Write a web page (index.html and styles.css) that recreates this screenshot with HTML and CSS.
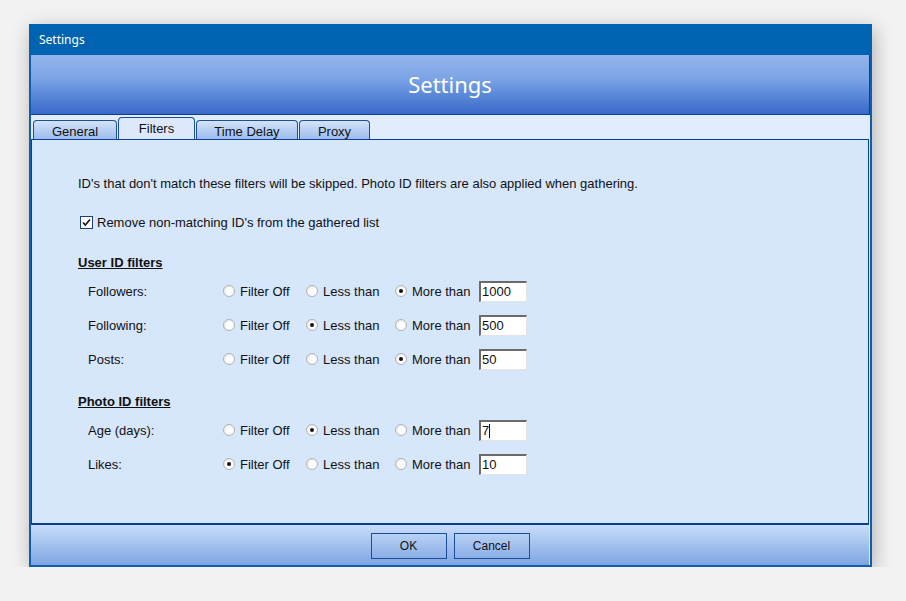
FILE: index.html
```html
<!DOCTYPE html>
<html>
  <head>
    <meta charset="UTF-8" />
    <title>Settings</title>
    <link rel="stylesheet" href="styles.css">
  </head>
  <body>
    <div class="ventana">
      <div class="barra-titulo">Settings</div>
      <div class="cabecera">Settings</div>
      <div class="pestanas">
        <div class="pestana">General</div>
        <div class="pestana activa">Filters</div>
        <div class="pestana">Time Delay</div>
        <div class="pestana">Proxy</div>
      </div>
      <div class="panel">
        <p class="intro">ID's that don't match these filters will be skipped. Photo ID filters are also applied when gathering.</p>
        <div class="check-fila">
          <span class="check">
            <svg width="11" height="11" viewBox="0 0 11 11"><path d="M2 5.5 L4.3 8 L9 2.5" fill="none" stroke="#111" stroke-width="1.6"/></svg>
          </span>
          Remove non-matching ID's from the gathered list
        </div>

        <div class="seccion">User ID filters</div>
        <div class="fila primera">
          <span class="etiqueta">Followers:</span>
          <span class="opcion"><i class="radio"></i>Filter Off</span>
          <span class="opcion"><i class="radio"></i>Less than</span>
          <span class="opcion"><i class="radio on"></i>More than</span>
          <span class="caja-texto">1000</span>
        </div>
        <div class="fila">
          <span class="etiqueta">Following:</span>
          <span class="opcion"><i class="radio"></i>Filter Off</span>
          <span class="opcion"><i class="radio on"></i>Less than</span>
          <span class="opcion"><i class="radio"></i>More than</span>
          <span class="caja-texto">500</span>
        </div>
        <div class="fila">
          <span class="etiqueta">Posts:</span>
          <span class="opcion"><i class="radio"></i>Filter Off</span>
          <span class="opcion"><i class="radio"></i>Less than</span>
          <span class="opcion"><i class="radio on"></i>More than</span>
          <span class="caja-texto">50</span>
        </div>

        <div class="seccion segunda">Photo ID filters</div>
        <div class="fila primera">
          <span class="etiqueta">Age (days):</span>
          <span class="opcion"><i class="radio"></i>Filter Off</span>
          <span class="opcion"><i class="radio on"></i>Less than</span>
          <span class="opcion"><i class="radio"></i>More than</span>
          <span class="caja-texto">7<span class="cursor"></span></span>
        </div>
        <div class="fila">
          <span class="etiqueta">Likes:</span>
          <span class="opcion"><i class="radio on"></i>Filter Off</span>
          <span class="opcion"><i class="radio"></i>Less than</span>
          <span class="opcion"><i class="radio"></i>More than</span>
          <span class="caja-texto">10</span>
        </div>
      </div>
      <div class="pie">
        <div class="boton">OK</div>
        <div class="boton">Cancel</div>
      </div>
    </div>
  </body>
</html>
```

FILE: styles.css
```css
body {
  margin: 0;
  padding: 0;
  background-color: #f2f2f2;
  font-family: "Liberation Sans", Arial, sans-serif;
  font-size: 13px;
  color: #111;
}

.ventana {
  width: 839px;
  height: 541px;
  margin: 24px 0 0 29px;
  border: 2px solid #0d5db2;
  border-top: 0;
  display: flex;
  flex-direction: column;
  background-color: #e1edfd;
  box-shadow: 2px 5px 18px rgba(0, 0, 0, 0.28);
}

.barra-titulo {
  height: 31px;
  margin: 0 -2px;
  padding-left: 10px;
  background-color: #0063b1;
  color: white;
  font-family: "Noto Sans", "Open Sans", sans-serif;
  font-size: 12px;
  line-height: 31px;
}

.cabecera {
  height: 59px;
  border-bottom: 1px solid #0b3f8f;
  border-right: 1px solid #0b3f8f;
  background: linear-gradient(#93b5eb, #7ba4e6 40%, #6390dc 60%, #3a69c9);
  color: white;
  font-family: "Noto Sans", "Open Sans", sans-serif;
  font-size: 22px;
  line-height: 58px;
  text-align: center;
}

.pestanas {
  height: 24px;
  display: flex;
  align-items: flex-end;
  padding-left: 2px;
  box-sizing: border-box;
}

.pestana {
  height: 19px;
  box-sizing: border-box;
  border: 1px solid #1a4f9c;
  border-bottom: 0;
  border-radius: 4px 4px 0 0;
  background: linear-gradient(#d3e3fa, #9dbced);
  line-height: 21px;
  text-align: center;
  margin-right: 1px;
}

.pestana:nth-child(1) { width: 84px; }
.pestana:nth-child(2) { width: 77px; }
.pestana:nth-child(3) { width: 102px; }
.pestana:nth-child(4) { width: 71px; }

.pestana.activa {
  height: 22px;
  line-height: 22px;
  background: #dde9fb;
}

.panel {
  flex: 1;
  border: 1px solid #0b3f8f;
  border-bottom-width: 2px;
  margin-right: 1px;
  background-color: #d6e6fb;
  padding: 36px 0 0 46px;
}

.intro {
  margin: 0;
  line-height: 15px;
}

.check-fila {
  display: flex;
  align-items: center;
  margin-top: 24px;
  margin-left: 2px;
  height: 15px;
}

.check {
  width: 11px;
  height: 11px;
  border: 1px solid #1c3f7f;
  background-color: white;
  margin-right: 4px;
  display: flex;
}

.seccion {
  margin-top: 25px;
  font-weight: bold;
  text-decoration: underline;
  line-height: 15px;
}

.seccion.segunda {
  margin-top: 18px;
}

.fila {
  display: flex;
  align-items: center;
  height: 34px;
  padding-left: 10px;
}

.fila.primera {
  margin-top: 4px;
}

.etiqueta {
  width: 135px;
}

.opcion {
  display: flex;
  align-items: center;
}

.opcion:nth-child(2) { width: 83px; }
.opcion:nth-child(3) { width: 89px; }
.opcion:nth-child(4) { width: 84px; }

.radio {
  width: 12px;
  height: 12px;
  box-sizing: border-box;
  border-radius: 50%;
  border: 1px solid #b4b4b4;
  background: radial-gradient(circle at 60% 60%, #ffffff 35%, #dedede);
  margin-right: 5px;
  display: flex;
  align-items: center;
  justify-content: center;
}

.radio.on::after {
  content: "";
  width: 4px;
  height: 4px;
  border-radius: 50%;
  background-color: #111;
}

.caja-texto {
  width: 48px;
  height: 21px;
  box-sizing: border-box;
  border: 1px solid #e3e3e3;
  border-top: 2px solid #6b6b6b;
  border-left: 2px solid #6b6b6b;
  background-color: white;
  padding-left: 1px;
  line-height: 17px;
  display: flex;
  align-items: center;
}

.cursor {
  width: 1px;
  height: 14px;
  background-color: #111;
}

.pie {
  height: 40px;
  margin-right: 1px;
  background: linear-gradient(#c8ddfa, #a3c1ee 50%, #7ea4e1);
  display: flex;
  justify-content: center;
  align-items: flex-start;
  gap: 7px;
  padding-top: 8px;
  box-sizing: border-box;
}

.boton {
  width: 76px;
  height: 26px;
  box-sizing: border-box;
  border: 1px solid #1a4e9a;
  font-size: 12px;
  line-height: 24px;
  text-align: center;
}
```
